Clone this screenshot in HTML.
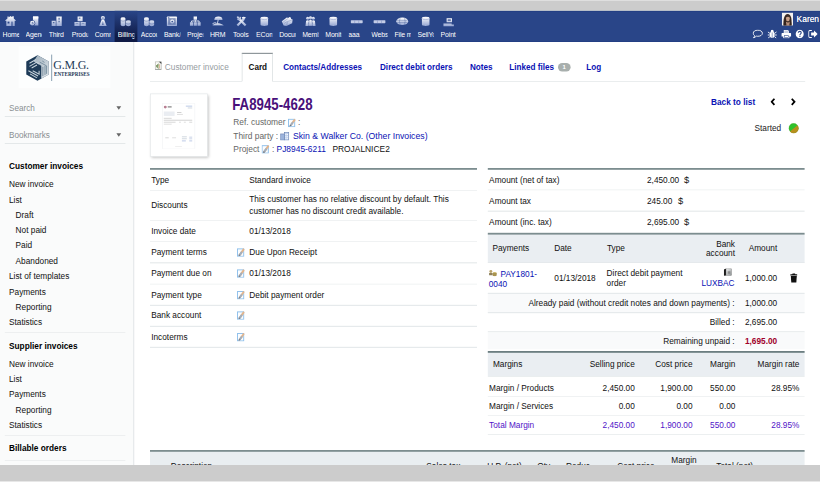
<!DOCTYPE html>
<html lang="en">
<head>
<meta charset="utf-8">
<title>FA8945-4628 - Customer invoice</title>
<style>
html,body{margin:0;padding:0;}
body{width:820px;height:482px;overflow:hidden;background:#fff;position:relative;}
#root{position:absolute;left:0;top:0;width:1367px;height:804px;transform:scale(0.6);transform-origin:0 0;
  font-family:"Liberation Sans",Arial,sans-serif;font-size:13.800px;color:#111;overflow:hidden;background:#fff;}
#root *{box-sizing:border-box;}
a{text-decoration:none;color:#0a12b4;}
.abs{position:absolute;}
#topstrip{left:0;top:0;width:1367px;height:18px;background:#cccccc;border-top:1.5px solid #ececec;border-bottom:1.200px solid #dedfd8;}
#botstrip{left:0;top:775px;width:1367px;height:29px;background:#cccccc;border-bottom:2.200px solid #eeeeee;}
/* top nav */
#nav{left:0;top:17.8px;width:1367px;height:52.2px;background:#294588;box-shadow:inset 0 1px 0 #1f3a80, inset 0 -1px 0 #1f3a80;}
.mi{position:absolute;top:0;width:38.4px;height:52.2px;}
.mi.sel{background:linear-gradient(#294588,#0f1a45 85%);}
.mi svg{position:absolute;left:8.7px;top:7px;width:21px;height:21px;}
.mi .lb{position:absolute;left:5.6px;top:31px;width:27.4px;height:16px;overflow:hidden;white-space:nowrap;
  color:#fff;font-size:11.5px;line-height:16px;letter-spacing:-0.2px;}
/* side */
#side{left:0;top:70px;width:223px;height:720px;background:#fafbfb;border-right:1.5px solid #dde2e4;box-shadow:1px 0 1px rgba(200,206,210,.35);}
.vt{position:absolute;left:15px;font-weight:bold;font-size:13.800px;color:#000;white-space:nowrap;line-height:16px;}
.vi{position:absolute;left:15px;font-size:13.800px;color:#111;white-space:nowrap;line-height:16px;}
.vi.in{left:26px;}
.vsep{position:absolute;left:8px;width:201px;height:1.5px;background:#e4e8ea;}
.sbox{position:absolute;left:8px;width:201px;height:34px;border-bottom:1.5px solid #d5dcde;color:#8a8f92;font-size:13.600px;line-height:16px;}
.sbox span{position:absolute;left:7px;top:11.800px;}
.sbox i{position:absolute;right:7px;top:16.500px;width:0;height:0;border-left:4.5px solid transparent;border-right:4.5px solid transparent;border-top:6px solid #666;}
/* main */
#main{left:0;top:0;width:1367px;height:804px;}
.tab{position:absolute;font-weight:bold;color:#0a12b4;white-space:nowrap;line-height:16px;font-size:13.600px;}
.tab.tt{font-weight:normal;color:#979c9f;font-size:13.800px;}
.tab.tc{color:#111;}
.ref{font-weight:bold;color:#48107a;font-size:26px;line-height:28px;white-space:nowrap;transform:scaleX(0.85);transform-origin:0 50%;}
.sub{color:#666;white-space:nowrap;line-height:16px;font-size:14px;}
.sub a.big{font-size:14.500px;}
.ed{display:inline-block;width:13px;height:15px;vertical-align:-3px;}
.t{position:absolute;white-space:nowrap;line-height:16px;color:#111;}

</style>
</head>
<body>
<div id="root">
<div id="topstrip" class="abs"></div>
<div id="nav" class="abs">
<svg width="0" height="0" style="position:absolute"><defs><linearGradient id="g" x1="0" y1="0" x2="0" y2="1"><stop offset="0" stop-color="#ffffff"/><stop offset="1" stop-color="#95a6d2"/></linearGradient></defs></svg>
<a class="mi" style="left:-1.38px"><svg viewBox="0 0 20 20"><path d="M10 1.500 L12.200 3.300 L13.200 2 L15.200 2 L15.200 5.600 L19 9 L16.600 9 V17.500 H3.400 V9 H1 L5.200 5.400 V2.500 H7 V3.900 Z" fill="url(#g)"/><rect x="5.300" y="10.500" width="3" height="3" fill="#294588"/><rect x="10.800" y="10.500" width="3.400" height="7" fill="#294588" opacity=".55"/></svg><span class="lb">Home</span></a>
<a class="mi" style="left:37.04px"><svg viewBox="0 0 20 20"><path d="M8.500 2.500 h8.500 v14 h-8.500z" fill="url(#g)"/><path d="M8.500 2.500 h8.500 v3 h-8.500z" fill="#fff"/><circle cx="7.500" cy="13" r="4.600" fill="#294588"/><circle cx="7.500" cy="13" r="3.700" fill="url(#g)"/><path d="M7.500 10.800 V13 H9.500" stroke="#294588" stroke-width="1" fill="none"/></svg><span class="lb">Agenda</span></a>
<a class="mi" style="left:75.46px"><svg viewBox="0 0 20 20"><path d="M9.500 2.500 h8.500 v15 h-8.500z M2 9 h6.500 v8.500 h-6.500z" fill="url(#g)"/><path d="M12.800 4.500h2v3h-2zM12.800 9h2v2.500h-2zM4 11h2.400v2H4z" fill="#294588" opacity=".75"/></svg><span class="lb">Third parties</span></a>
<a class="mi" style="left:113.88px"><svg viewBox="0 0 20 20"><path d="M6 2.500 h8 v7.300 h-8z M1 11 h8.400 v6.500 h-8.400z M10.600 11 h8.400 v6.500 h-8.400z" fill="url(#g)"/><path d="M8 4h2.500v2.500H8z" fill="#294588" opacity=".6"/><path d="M3 12.500h4v1.200H3zM12.600 12.500h4v1.200h-4z" fill="#294588" opacity=".45"/></svg><span class="lb">Products</span></a>
<a class="mi" style="left:152.30px"><svg viewBox="0 0 20 20"><circle cx="10" cy="4.800" r="3.300" fill="url(#g)"/><circle cx="10" cy="4.800" r="1.500" fill="#294588" opacity=".35"/><path d="M8 7.500 h4 l4 10 h-12z" fill="url(#g)"/><path d="M10 9 l1.300 7 h-2.600z" fill="#294588" opacity=".7"/></svg><span class="lb">Commercial</span></a>
<a class="mi sel" style="left:190.72px"><svg viewBox="0 0 20 20"><path d="M2 5.500 a3.800 1.800 0 0 1 7.600 0 v10.500 a3.800 1.800 0 0 1 -7.600 0z M10.400 10 a3.800 1.800 0 0 1 7.600 0 v6 a3.800 1.800 0 0 1 -7.600 0z" fill="url(#g)"/><path d="M2 8 a3.800 1.800 0 0 0 7.600 0 M10.400 12.500 a3.800 1.800 0 0 0 7.600 0" stroke="#294588" stroke-width=".7" fill="none" opacity=".7"/></svg><span class="lb">Billing | Payment</span></a>
<a class="mi" style="left:229.14px"><svg viewBox="0 0 20 20"><path d="M2 5.500 a3.800 1.800 0 0 1 7.600 0 v10.500 a3.800 1.800 0 0 1 -7.600 0z M10.400 10 a3.800 1.800 0 0 1 7.600 0 v6 a3.800 1.800 0 0 1 -7.600 0z" fill="url(#g)"/><path d="M2 8 a3.800 1.800 0 0 0 7.600 0 M10.400 12.500 a3.800 1.800 0 0 0 7.600 0" stroke="#294588" stroke-width=".7" fill="none" opacity=".7"/></svg><span class="lb">Accounting</span></a>
<a class="mi" style="left:267.56px"><svg viewBox="0 0 20 20"><rect x="2" y="2.500" width="16" height="15" rx="1" fill="url(#g)"/><rect x="4" y="5" width="12" height="10.500" fill="#294588" opacity=".5"/><circle cx="10.500" cy="10.500" r="3.300" fill="url(#g)"/><circle cx="10.500" cy="10.500" r="1.200" fill="#294588"/><rect x="3.500" y="3.500" width="2.500" height="1.800" fill="#294588" opacity=".7"/></svg><span class="lb">Bank/Cash</span></a>
<a class="mi" style="left:305.98px"><svg viewBox="0 0 20 20"><path d="M7.300 2.500 h5.400 v5 h-5.400z M1.500 11.500 h5 v5.500 h-5z M7.500 11.500 h5 v5.500 h-5z M13.500 11.500 h5 v5.500 h-5z" fill="url(#g)"/><path d="M10 7.500 V11.500 M4 11.500 V9.500 H16 V11.500" stroke="#dfe5f3" stroke-width="1.500" fill="none"/></svg><span class="lb">Projects</span></a>
<a class="mi" style="left:344.40px"><svg viewBox="0 0 20 20"><path d="M4 8 a6.500 5.500 0 0 1 13 0 z" fill="url(#g)"/><path d="M10.200 7.500 L8.800 13.500" stroke="#e6ebf6" stroke-width="1.300"/><path d="M1 16.500 q2 -3 6 -3.200 q5 -.5 8 1 q3 1 4 2.200 z" fill="url(#g)"/><path d="M1 14 q3 -2.500 6 -1.500" stroke="#e6ebf6" stroke-width="1.300" fill="none"/></svg><span class="lb">HRM</span></a>
<a class="mi" style="left:382.82px"><svg viewBox="0 0 20 20"><path d="M2.300 15.500 L11.800 6 L14.200 8.400 L4.700 17.900z" fill="url(#g)"/><path d="M10.300 3.700 q3.700 -2.200 7.200 1 l-2 .5 l-1 3.200 l-1.800 1.800 l-3 -3 l1.800 -1.800z" fill="url(#g)"/><path d="M17.700 15.500 L8.200 6 L5.800 8.400 L15.300 17.900z" fill="url(#g)"/><path d="M3 7 a3.300 3.300 0 1 0 4.600 -4.600 l-1.100 2.600 l-2.200 .3z" fill="url(#g)"/><path d="M2.300 3 l2.200 -1.200 l2.200 2.700 l-2.200 1.700z" fill="url(#g)"/></svg><span class="lb">Tools</span></a>
<a class="mi" style="left:421.24px"><svg viewBox="0 0 20 20"><path d="M4 5 a6 2.300 0 0 1 12 0 v10 a6 2.300 0 0 1 -12 0z" fill="url(#g)"/><path d="M4 5 a6 2.300 0 0 0 12 0" stroke="#8fa0cc" stroke-width=".9" fill="none"/></svg><span class="lb">ECommerce</span></a>
<a class="mi" style="left:459.66px"><svg viewBox="0 0 20 20"><path d="M1.500 10 L9.500 3.800 L12.300 4.800 L13 3.200 L16 3.800 L16.200 6 L18.800 7.200 L18 13 L9 17.500 L4.500 16.500z" fill="url(#g)"/><path d="M4 11 L11.500 5.500 M5.500 13.500 L9.500 10.500" stroke="#294588" stroke-width=".9" opacity=".4"/><path d="M9.300 17 L10.500 10.500 L18.500 7.500" stroke="#294588" stroke-width=".8" fill="none" opacity=".45"/></svg><span class="lb">Documents</span></a>
<a class="mi" style="left:498.08px"><svg viewBox="0 0 20 20"><circle cx="5.500" cy="5.200" r="2.400" fill="url(#g)"/><circle cx="14.500" cy="5.200" r="2.400" fill="url(#g)"/><circle cx="10" cy="4.500" r="2.700" fill="url(#g)"/><path d="M2 17.500 l1 -8.500 q2.500 -1.500 5 0 l-1 4 l1.500 4.500z M18 17.500 l-1 -8.500 q-2.500 -1.500 -5 0 l1 4 l-1.500 4.500z" fill="url(#g)"/><path d="M6.800 17.500 l1 -9.700 q2.200 -1 4.400 0 l1 9.700z" fill="url(#g)" stroke="#294588" stroke-width=".5"/></svg><span class="lb">Members</span></a>
<a class="mi" style="left:536.50px"><svg viewBox="0 0 20 20"><path d="M4 5 a6 2.300 0 0 1 12 0 v10 a6 2.300 0 0 1 -12 0z" fill="url(#g)"/><path d="M4 5 a6 2.300 0 0 0 12 0" stroke="#8fa0cc" stroke-width=".9" fill="none"/></svg><span class="lb">Monitoring</span></a>
<a class="mi" style="left:574.92px"><svg viewBox="0 0 20 20"><rect x="0.500" y="8.300" width="19" height="4.600" rx="1" fill="#c3cce6"/><path d="M6.800 8.300 v4.600 M13.200 8.300 v4.600" stroke="#8493c2" stroke-width=".9"/></svg><span class="lb">aaa</span></a>
<a class="mi" style="left:613.34px"><svg viewBox="0 0 20 20"><rect x="0.500" y="8.300" width="19" height="4.600" rx="1" fill="#c3cce6"/><path d="M6.800 8.300 v4.600 M13.200 8.300 v4.600" stroke="#8493c2" stroke-width=".9"/></svg><span class="lb">Websites</span></a>
<a class="mi" style="left:651.76px"><svg viewBox="0 0 20 20"><ellipse cx="10" cy="10" rx="9.500" ry="6" fill="url(#g)"/><path d="M1.500 8.500 h17 M1.500 11.800 h17 M6.500 4.500 q-2 5.500 0 11 M13.500 4.500 q2 5.500 0 11" stroke="#294588" stroke-width=".8" fill="none" opacity=".6"/></svg><span class="lb">File manager</span></a>
<a class="mi" style="left:690.18px"><svg viewBox="0 0 20 20"><path d="M4 5 a6 2.300 0 0 1 12 0 v10 a6 2.300 0 0 1 -12 0z" fill="url(#g)"/><path d="M4 5 a6 2.300 0 0 0 12 0" stroke="#8fa0cc" stroke-width=".9" fill="none"/></svg><span class="lb">SellYourSaas</span></a>
<a class="mi" style="left:728.60px"><svg viewBox="0 0 20 20"><path d="M7 5 h8.500 v6.500 h-8.500z M2 13.500 h13 v1.500 h3.500 v3 h-16.500z" fill="url(#g)"/><rect x="8.700" y="6.700" width="5" height="3" fill="#294588" opacity=".7"/></svg><span class="lb">Point of sale</span></a>
<svg class="abs" style="left:1303.3px;top:3.7px;width:18.7px;height:21.7px" viewBox="0 0 19 22" preserveAspectRatio="none">
<rect width="19" height="22" fill="#f4f2f0"/>
<path d="M3 22 C2 12 4 3 10 2.500 C16 3 17 10 16.500 22 Z" fill="#3a2a24"/>
<ellipse cx="10.300" cy="10" rx="3.300" ry="4.600" fill="#c9a088"/>
<path d="M6 8 C7 4 13 4 14.500 8 C12 6.500 9 6.500 6 8z" fill="#3a2a24"/>
<path d="M7 15 C9 17.500 12 17.500 13.500 15 L14.500 22 L6 22z" fill="#b58e78"/>
<path d="M3 22 C3 16 5 12 6.500 9 C6.500 14 7.500 18 8 22z M16.500 22 C16.500 16 15 12 14 9 C14 14 13.500 18 12.500 22z" fill="#33241f"/>
</svg>
<span class="abs" style="left:1327.7px;top:5.9px;color:#fff;font-size:14px;line-height:16px;white-space:nowrap;text-shadow:0 0 .6px rgba(255,255,255,.8)">Karen</span>
<svg class="abs" style="left:1253.7px;top:31.0px;width:18.0px;height:15.3px" viewBox="0 0 20 18" preserveAspectRatio="none"><path d="M10 1.500 C15 1.500 18.500 4 18.500 7.500 C18.500 11 15 13.500 10 13.500 C9 13.500 8 13.400 7.200 13.200 C6 14.800 4 16 2 16.500 C3.200 15.300 4 13.800 4 12.200 C2.400 11 1.500 9.400 1.500 7.500 C1.500 4 5 1.500 10 1.500z" fill="none" stroke="#fff" stroke-width="1.700"/></svg>
<svg class="abs" style="left:1278.8px;top:31.0px;width:16.0px;height:15.3px" viewBox="0 0 20 18" preserveAspectRatio="none"><ellipse cx="10" cy="10.500" rx="5" ry="6.500" fill="#fff"/><circle cx="10" cy="3.500" r="2.800" fill="#fff"/><path d="M1 5 L5.500 8 M19 5 L14.500 8 M0.500 11 H5 M19.500 11 H15 M1.500 17 L5.500 14 M18.500 17 L14.500 14" stroke="#fff" stroke-width="1.800"/><path d="M10 6 V17" stroke="#294588" stroke-width="1"/></svg>
<svg class="abs" style="left:1301.7px;top:31.0px;width:17.0px;height:15.3px" viewBox="0 0 20 18" preserveAspectRatio="none"><path d="M5 1 H13 L15 3 V7 H5z" fill="#fff"/><path d="M2 7 H18 Q19.500 7 19.500 8.500 V14 H16 V17.500 H4 V14 H0.500 V8.500 Q0.500 7 2 7z" fill="#fff"/><rect x="5.500" y="11.500" width="9" height="4.500" fill="#294588"/><rect x="6.500" y="12.500" width="7" height="2.500" fill="#fff"/><rect x="6.200" y="2.200" width="7.300" height="4.800" fill="#294588" opacity=".25"/></svg>
<svg class="abs" style="left:1325.0px;top:31.0px;width:15.7px;height:15.3px" viewBox="0 0 20 18" preserveAspectRatio="none"><circle cx="10" cy="9" r="8.500" fill="#fff"/><path d="M7 6.800 C7 4.800 8.500 3.800 10.200 3.800 C12 3.800 13.300 4.900 13.300 6.500 C13.300 8.600 10.400 8.800 10.400 11" fill="none" stroke="#294588" stroke-width="2.200"/><rect x="9.200" y="12.300" width="2.400" height="2.400" fill="#294588"/></svg>
<svg class="abs" style="left:1347.2px;top:31.0px;width:16.2px;height:15.3px" viewBox="0 0 20 18" preserveAspectRatio="none"><path d="M7.500 2 H3.500 Q1 2 1 4.500 V13.500 Q1 16 3.500 16 H7.500" fill="none" stroke="#fff" stroke-width="2"/><path d="M6 6.200 H12 V2 L19.500 9 L12 16 V11.800 H6z" fill="#fff"/></svg>
</div>
<div id="side" class="abs">
<div class="abs" style="left:31.3px;top:6.7px;width:152.5px;height:70.0px;background:#fdfefe"></div>
<svg class="abs" style="left:42.0px;top:20.5px;width:41.0px;height:44.7px" viewBox="0 0 46 50">
<defs><linearGradient id="lg1" x1="0" y1="0" x2="1" y2="1"><stop offset="0" stop-color="#9fb0bd"/><stop offset="1" stop-color="#dfe5e9"/></linearGradient></defs>
<path d="M23 1 L44 13 V37 L23 49 L2 37 V13 Z" fill="#1d3a57"/>
<path d="M23 1 L44 13 V37 L30 45 V21 L16 13 Z" fill="url(#lg1)"/>
<path d="M27 14 L40 21 V36 M32 12 L36 14.500 M33 23 V40 M37 21 V38" stroke="#6f8798" stroke-width="1.600" fill="none"/>
<path d="M8 16 L20 9 M8 22 L21 14.500 L26 17.500 M12 25 L22 19.500 M6 30 L24 40 M9 36 L22 43.500 M14 30 L26 36.500 L26 30" stroke="#c6d2da" stroke-width="2" fill="none"/>
</svg>
<div class="abs" style="left:85.0px;top:20.8px;width:1.6px;height:44.2px;background:#9db0be"></div>
<div class="abs" style="left:88.8px;top:25.2px;font-family:'Liberation Serif',serif;font-size:20px;line-height:26px;color:#1d3a57;white-space:nowrap;letter-spacing:-0.400px">G.M.G.</div>
<div class="abs" style="left:89.7px;top:45.5px;font-family:'Liberation Serif',serif;font-weight:bold;font-size:11.500px;line-height:12px;color:#1d3a57;white-space:nowrap;transform:scaleX(0.74);transform-origin:0 50%">ENTERPRISES</div>
<div class="sbox" style="top:90.8px"><span>Search</span><i></i></div>
<div class="sbox" style="top:135.8px"><span>Bookmarks</span><i></i></div>
<div class="vt" style="top:200.0px">Customer invoices</div>
<div class="vi" style="top:230.0px">New invoice</div>
<div class="vi" style="top:255.5px">List</div>
<div class="vi in" style="top:281.0px">Draft</div>
<div class="vi in" style="top:306.5px">Not paid</div>
<div class="vi in" style="top:332.1px">Paid</div>
<div class="vi in" style="top:357.7px">Abandoned</div>
<div class="vi" style="top:383.4px">List of templates</div>
<div class="vi" style="top:408.9px">Payments</div>
<div class="vi in" style="top:434.5px">Reporting</div>
<div class="vi" style="top:460.2px">Statistics</div>
<div class="vsep" style="top:483.6px"></div>
<div class="vt" style="top:498.5px">Supplier invoices</div>
<div class="vi" style="top:528.9px">New invoice</div>
<div class="vi" style="top:554.5px">List</div>
<div class="vi" style="top:580.0px">Payments</div>
<div class="vi in" style="top:605.5px">Reporting</div>
<div class="vi" style="top:631.0px">Statistics</div>
<div class="vsep" style="top:654.8px"></div>
<div class="vt" style="top:668.9px">Billable orders</div>
<div class="vsep" style="top:696.5px"></div>
</div>
<div id="main" class="abs">
<div class="abs" style="left:250.0px;top:135.2px;width:1091.7px;height:1.3px;background:#dce1e3"></div>
<div class="abs" style="left:402.8px;top:88.0px;width:52.7px;height:49.3px;background:#fff;border:1.5px solid #cfd5d8;border-bottom:2px solid #fff;border-top:2px solid #8f979b"></div>
<svg class="abs" style="left:258.2px;top:101.7px;width:11.5px;height:14.5px" viewBox="0 0 12 15"><path d="M0.800 0.800 H7.500 L11.200 4.500 V14.200 H0.800z" fill="#fbfbf8" stroke="#9a9c96" stroke-width="1"/><path d="M0.500 13.600 H11.500 V15 H0.500z" fill="#3f4a44"/><path d="M7 0.500 L11.500 0.500 L11.500 5 Z" fill="#3c3f3c"/><path d="M7.600 5.200 C5 4.600 3.600 6.300 3.600 8.500 C3.600 10.800 5 12.300 7.600 11.800 M2.500 7.600 H6.800 M2.500 9.500 H6.500" fill="none" stroke="#6f8a52" stroke-width="1.500"/><path d="M8.300 5.500 V12.500" stroke="#d9a07a" stroke-width="1.300"/></svg>
<div class="tab tt" style="left:274.7px;top:104.2px">Customer invoice</div>
<div class="tab tc" style="left:414.2px;top:104.2px">Card</div>
<div class="tab" style="left:472.0px;top:104.2px">Contacts/Addresses</div>
<div class="tab" style="left:633.3px;top:104.2px">Direct debit orders</div>
<div class="tab" style="left:783.3px;top:104.2px">Notes</div>
<div class="tab" style="left:848.8px;top:104.2px">Linked files</div>
<div class="abs" style="left:930.0px;top:104.8px;width:20.8px;height:14.0px;border-radius:8px;background:#a8afad;color:#fff;font-size:10px;line-height:13.7px;text-align:center;font-weight:bold">1</div>
<div class="tab" style="left:977.2px;top:104.2px">Log</div>
<div class="abs" style="left:249.8px;top:155.5px;width:96.0px;height:105.5px;background:#fff;border:1.2px solid #dfe3e5;box-shadow:1.5px 2.5px 5px rgba(0,0,0,.28)"></div>
<svg class="abs" style="left:270.0px;top:171.7px;width:55.8px;height:76.7px" viewBox="0 0 67 94" opacity=".6">
<rect x="0.5" y="0.5" width="66" height="93" fill="none" stroke="#e3e6ea" stroke-width="1"/>
<circle cx="6" cy="8" r="3" fill="#8a2a4a"/><rect x="11" y="6" width="8" height="3" fill="#555"/>
<rect x="48" y="5" width="13" height="2" fill="#8fa6d8"/><rect x="52" y="9" width="9" height="1.500" fill="#9ab"/>
<rect x="3" y="17" width="22" height="9" fill="#dde2ea"/><rect x="30" y="18" width="9" height="1.500" fill="#999"/><rect x="30" y="22" width="12" height="1.500" fill="#bbb"/>
<rect x="3" y="30" width="16" height="1.500" fill="#aaa"/><rect x="3" y="34" width="58" height="1.200" fill="#888"/>
<rect x="3" y="38" width="24" height="1.500" fill="#aaa"/><rect x="34" y="38" width="4" height="1.500" fill="#bbb"/><rect x="44" y="38" width="4" height="1.500" fill="#bbb"/><rect x="55" y="38" width="6" height="1.500" fill="#aaa"/>
<rect x="3" y="42" width="16" height="1.500" fill="#bbb"/>
<rect x="6" y="70" width="7" height="1.500" fill="#aaa"/><rect x="20" y="70" width="8" height="1.500" fill="#bbb"/>
<rect x="40" y="68" width="10" height="1.500" fill="#9ab"/><rect x="40" y="72" width="10" height="1.500" fill="#9ab"/><rect x="40" y="76" width="8" height="2" fill="#8fa6d8"/><rect x="55" y="68" width="6" height="6" fill="#c5d0e6"/><rect x="55" y="76" width="6" height="2" fill="#8fa6d8"/>
<rect x="26" y="88" width="14" height="1" fill="#ccc"/>
</svg>
<div class="abs ref" style="left:386.7px;top:159.8px">FA8945-4628</div>
<div class="abs sub" style="left:388.8px;top:195.7px">Ref. customer <svg class="ed" viewBox="0 0 13 15"><rect x="0.800" y="1.800" width="10.400" height="12.400" fill="#fbfdff" stroke="#8fc0ec" stroke-width="1.600"/><path d="M3.200 10.800 L10.300 0.800 L13 2.800 L5.900 12.700z" fill="#e2b48c"/><path d="M3.200 10.800 L6.800 5.800 L9.500 7.700 L5.900 12.700 L2.500 13.800z" fill="#a3afbd"/><path d="M2.500 13.800 L3.200 10.800 L5.900 12.700z" fill="#6a7078"/></svg> :</div>
<div class="abs sub" style="left:388.8px;top:217.7px">Third party : <svg class="ed" style="width:15px;height:14px;margin-right:2px" viewBox="0 0 12 13" preserveAspectRatio="none"><rect x="0.500" y="3" width="5" height="9.500" fill="#9db4dc" stroke="#5d78aa" stroke-width=".8"/><rect x="5.500" y="0.500" width="6" height="12" fill="#c3d3ee" stroke="#5d78aa" stroke-width=".8"/><path d="M7 3h1.200v1.500H7zM9 3h1.200v1.500H9zM7 6h1.200v1.500H7zM9 6h1.200v1.500H9zM7 9h1.200v1.500H7zM9 9h1.200v1.500H9z" fill="#fff"/></svg> <a class="big">Skin &amp; Walker Co. (Other Invoices)</a></div>
<div class="abs sub" style="left:388.8px;top:240.3px">Project <svg class="ed" viewBox="0 0 13 15"><rect x="0.800" y="1.800" width="10.400" height="12.400" fill="#fbfdff" stroke="#8fc0ec" stroke-width="1.600"/><path d="M3.200 10.800 L10.300 0.800 L13 2.800 L5.900 12.700z" fill="#e2b48c"/><path d="M3.200 10.800 L6.800 5.800 L9.500 7.700 L5.900 12.700 L2.500 13.800z" fill="#a3afbd"/><path d="M2.500 13.800 L3.200 10.800 L5.900 12.700z" fill="#6a7078"/></svg> : <a>PJ8945-6211</a> &nbsp;<span style="color:#111;margin-left:3px">PROJALNICE2</span></div>
<div class="abs" style="left:1185.0px;top:162.5px;font-weight:bold;color:#0a12b4;white-space:nowrap;line-height:16px">Back to list</div>
<svg class="abs" style="left:1284.2px;top:163.3px;width:8.3px;height:13.3px" viewBox="0 0 8 13"><path d="M6.500 1.500 L2 6.500 L6.500 11.500" fill="none" stroke="#000" stroke-width="2.900"/></svg>
<svg class="abs" style="left:1318.3px;top:163.3px;width:8.3px;height:13.3px" viewBox="0 0 8 13"><path d="M1.500 1.500 L6 6.500 L1.500 11.500" fill="none" stroke="#000" stroke-width="2.900"/></svg>
<div class="abs" style="left:1257.5px;top:205.8px;white-space:nowrap;line-height:16px;color:#222">Started</div>
<svg class="abs" style="left:1314.3px;top:205.3px;width:17.3px;height:17.3px" viewBox="0 0 20 20"><circle cx="10" cy="10" r="9.300" fill="#2fc22c"/><path d="M17.500 4.500 A9.300 9.300 0 0 1 3.000 16.200 Z" fill="#b8901c"/><circle cx="10" cy="10" r="9.300" fill="none" stroke="#7c8a3a" stroke-width=".8" opacity=".5"/></svg>
<div class="abs" style="left:250.0px;top:280.3px;width:545.0px;height:3px;background:#7c8d8f"></div>
<div class="abs" style="left:250.0px;top:316.8px;width:545.0px;height:1.5px;background:#e6eaec"></div>
<div class="abs" style="left:250.0px;top:366.9px;width:545.0px;height:1.5px;background:#e6eaec"></div>
<div class="abs" style="left:250.0px;top:401.8px;width:545.0px;height:1.5px;background:#e6eaec"></div>
<div class="abs" style="left:250.0px;top:437.4px;width:545.0px;height:1.5px;background:#e6eaec"></div>
<div class="abs" style="left:250.0px;top:472.8px;width:545.0px;height:1.5px;background:#e6eaec"></div>
<div class="abs" style="left:250.0px;top:508.2px;width:545.0px;height:1.5px;background:#e6eaec"></div>
<div class="abs" style="left:250.0px;top:543.2px;width:545.0px;height:1.5px;background:#e6eaec"></div>
<div class="abs" style="left:250.0px;top:578.4px;width:545.0px;height:1.5px;background:#e6eaec"></div>
<div class="t" style="left:252.0px;top:293.2px;">Type</div>
<div class="t" style="left:415.5px;top:293.2px;">Standard invoice</div>
<div class="t" style="left:252.0px;top:335.1px;">Discounts</div>
<div class="t" style="left:252.0px;top:377.9px;">Invoice date</div>
<div class="t" style="left:415.5px;top:377.9px;">01/13/2018</div>
<div class="t" style="left:252.0px;top:413.2px;">Payment terms</div>
<div class="abs" style="left:395.0px;top:413.0px"><svg class="ed" viewBox="0 0 13 15"><rect x="0.800" y="1.800" width="10.400" height="12.400" fill="#fbfdff" stroke="#8fc0ec" stroke-width="1.600"/><path d="M3.200 10.800 L10.300 0.800 L13 2.800 L5.900 12.700z" fill="#e2b48c"/><path d="M3.200 10.800 L6.800 5.800 L9.500 7.700 L5.900 12.700 L2.500 13.800z" fill="#a3afbd"/><path d="M2.500 13.800 L3.200 10.800 L5.900 12.700z" fill="#6a7078"/></svg></div>
<div class="t" style="left:415.5px;top:413.2px;">Due Upon Receipt</div>
<div class="t" style="left:252.0px;top:447.8px;">Payment due on</div>
<div class="abs" style="left:395.0px;top:447.6px"><svg class="ed" viewBox="0 0 13 15"><rect x="0.800" y="1.800" width="10.400" height="12.400" fill="#fbfdff" stroke="#8fc0ec" stroke-width="1.600"/><path d="M3.200 10.800 L10.300 0.800 L13 2.800 L5.900 12.700z" fill="#e2b48c"/><path d="M3.200 10.800 L6.800 5.800 L9.500 7.700 L5.900 12.700 L2.500 13.800z" fill="#a3afbd"/><path d="M2.500 13.800 L3.200 10.800 L5.900 12.700z" fill="#6a7078"/></svg></div>
<div class="t" style="left:415.5px;top:447.8px;">01/13/2018</div>
<div class="t" style="left:252.0px;top:484.1px;">Payment type</div>
<div class="abs" style="left:395.0px;top:483.9px"><svg class="ed" viewBox="0 0 13 15"><rect x="0.800" y="1.800" width="10.400" height="12.400" fill="#fbfdff" stroke="#8fc0ec" stroke-width="1.600"/><path d="M3.200 10.800 L10.300 0.800 L13 2.800 L5.900 12.700z" fill="#e2b48c"/><path d="M3.200 10.800 L6.800 5.800 L9.500 7.700 L5.900 12.700 L2.500 13.800z" fill="#a3afbd"/><path d="M2.500 13.800 L3.200 10.800 L5.900 12.700z" fill="#6a7078"/></svg></div>
<div class="t" style="left:415.5px;top:484.1px;">Debit payment order</div>
<div class="t" style="left:252.0px;top:518.3px;">Bank account</div>
<div class="abs" style="left:395.0px;top:518.1px"><svg class="ed" viewBox="0 0 13 15"><rect x="0.800" y="1.800" width="10.400" height="12.400" fill="#fbfdff" stroke="#8fc0ec" stroke-width="1.600"/><path d="M3.200 10.800 L10.300 0.800 L13 2.800 L5.900 12.700z" fill="#e2b48c"/><path d="M3.200 10.800 L6.800 5.800 L9.500 7.700 L5.900 12.700 L2.500 13.800z" fill="#a3afbd"/><path d="M2.500 13.800 L3.200 10.800 L5.900 12.700z" fill="#6a7078"/></svg></div>
<div class="t" style="left:252.0px;top:554.6px;">Incoterms</div>
<div class="abs" style="left:395.0px;top:554.4px"><svg class="ed" viewBox="0 0 13 15"><rect x="0.800" y="1.800" width="10.400" height="12.400" fill="#fbfdff" stroke="#8fc0ec" stroke-width="1.600"/><path d="M3.200 10.800 L10.300 0.800 L13 2.800 L5.900 12.700z" fill="#e2b48c"/><path d="M3.200 10.800 L6.800 5.800 L9.500 7.700 L5.900 12.700 L2.500 13.800z" fill="#a3afbd"/><path d="M2.500 13.800 L3.200 10.800 L5.900 12.700z" fill="#6a7078"/></svg></div>
<div class="t" style="left:415.5px;top:325.4px;">This customer has no relative discount by default. This</div>
<div class="t" style="left:415.5px;top:345.1px;">customer has no discount credit available.</div>
<div class="abs" style="left:812.5px;top:280.3px;width:528.8px;height:3px;background:#7c8d8f"></div>
<div class="abs" style="left:812.5px;top:315.8px;width:528.8px;height:1.5px;background:#e6eaec"></div>
<div class="abs" style="left:812.5px;top:351.1px;width:528.8px;height:1.5px;background:#e6eaec"></div>
<div class="t" style="left:815.2px;top:292.8px;">Amount (net of tax)</div>
<div class="t" style="left:1078.3px;top:292.8px;">2,450.00</div>
<div class="t" style="left:1140.0px;top:292.2px;font-size:15.600px">$</div>
<div class="t" style="left:815.2px;top:327.8px;">Amount tax</div>
<div class="t" style="left:1078.3px;top:327.8px;">245.00</div>
<div class="t" style="left:1130.0px;top:327.2px;font-size:15.600px">$</div>
<div class="t" style="left:815.2px;top:362.8px;">Amount (inc. tax)</div>
<div class="t" style="left:1078.3px;top:362.8px;">2,695.00</div>
<div class="t" style="left:1140.0px;top:362.2px;font-size:15.600px">$</div>
<div class="abs" style="left:812.5px;top:390.0px;width:528.8px;height:47.7px;background:#eaeef2"></div>
<div class="abs" style="left:812.5px;top:388.2px;width:528.8px;height:3px;background:#7c8d8f"></div>
<div class="abs" style="left:812.5px;top:436.9px;width:528.8px;height:1.5px;background:#dfe4e7"></div>
<div class="t" style="left:820.7px;top:406.8px;">Payments</div>
<div class="t" style="left:923.7px;top:406.8px;">Date</div>
<div class="t" style="left:1011.5px;top:406.8px;">Type</div>
<div class="t" style="right:142.0px;top:399.7px;text-align:right;">Bank</div>
<div class="t" style="right:142.0px;top:414.8px;text-align:right;">account</div>
<div class="t" style="left:1247.8px;top:406.8px;">Amount</div>
<div class="abs" style="left:812.5px;top:488.1px;width:528.8px;height:1.5px;background:#e6eaec"></div>
<svg class="abs" style="left:814.3px;top:449.2px;width:15.0px;height:11.7px" viewBox="0 0 15 12"><circle cx="4" cy="3.500" r="2.500" fill="#b9a26a"/><path d="M1 6h6v4H1z" fill="#8d7f5a"/><ellipse cx="10.500" cy="6" rx="3.500" ry="1.600" fill="#cdb86a"/><path d="M7 6v4a3.500 1.600 0 0 0 7 0V6" fill="#a89450"/></svg>
<div class="t" style="left:834.2px;top:449.0px;"><a>PAY1801-</a></div>
<div class="t" style="left:814.5px;top:465.7px;"><a>0040</a></div>
<div class="t" style="left:923.8px;top:456.0px;">01/13/2018</div>
<div class="t" style="left:1011.0px;top:447.5px;">Direct debit payment</div>
<div class="t" style="left:1011.0px;top:464.8px;">order</div>
<svg class="abs" style="left:1206.0px;top:447.2px;width:13.7px;height:13.2px" viewBox="0 0 12 12"><defs><linearGradient id="bk" x1="0" y1="0" x2="1" y2="1"><stop offset="0" stop-color="#f2f3f3"/><stop offset="1" stop-color="#8d9294"/></linearGradient></defs><path d="M0.300 2 L3.600 0.500 V11 L0.300 11.500z" fill="#1c1c1c"/><path d="M3.600 0.500 H11 Q11.800 0.500 11.800 1.300 V10.200 Q11.800 11 11 11 H3.600z" fill="url(#bk)" stroke="#666" stroke-width=".5"/><path d="M6 4.500h4v4H6z" fill="#777" opacity=".7"/></svg>
<div class="t" style="right:142.7px;top:464.8px;text-align:right;"><a>LUXBAC</a></div>
<div class="t" style="right:71.7px;top:456.0px;text-align:right;">1,000.00</div>
<svg class="abs" style="left:1317.2px;top:455.3px;width:12.0px;height:16.3px" viewBox="0 0 12 16"><path d="M4 0.500h4l.6 1.500H12v2H0v-2h3.400z" fill="#111"/><path d="M1 5h10l-.8 10.500H1.800z" fill="#111"/></svg>
<div class="abs" style="left:812.5px;top:489.7px;width:528.8px;height:30.8px;background:#f9fafb"></div>
<div class="abs" style="left:812.5px;top:520.1px;width:528.8px;height:1.5px;background:#e6eaec"></div>
<div class="abs" style="left:812.5px;top:552.2px;width:528.8px;height:1.5px;background:#e6eaec"></div>
<div class="abs" style="left:812.5px;top:553.7px;width:528.8px;height:28.0px;background:#f9fafb"></div>
<div class="t" style="right:142.7px;top:498.0px;text-align:right;">Already paid (without credit notes and down payments) :</div>
<div class="t" style="right:71.7px;top:498.0px;text-align:right;">1,000.00</div>
<div class="t" style="right:142.7px;top:528.5px;text-align:right;">Billed :</div>
<div class="t" style="right:71.7px;top:528.5px;text-align:right;">2,695.00</div>
<div class="t" style="right:142.7px;top:560.8px;text-align:right;">Remaining unpaid :</div>
<div class="t" style="right:71.7px;top:560.8px;text-align:right;font-weight:bold;color:#a0002a">1,695.00</div>
<div class="abs" style="left:812.5px;top:585.7px;width:528.8px;height:41.8px;background:#eaeef2"></div>
<div class="abs" style="left:812.5px;top:584.5px;width:528.8px;height:3px;background:#6c7e81"></div>
<div class="abs" style="left:812.5px;top:626.8px;width:528.8px;height:1.5px;background:#dfe4e7"></div>
<div class="abs" style="left:812.5px;top:659.9px;width:528.8px;height:1.5px;background:#e6eaec"></div>
<div class="abs" style="left:812.5px;top:691.8px;width:528.8px;height:1.5px;background:#e6eaec"></div>
<div class="abs" style="left:812.5px;top:723.6px;width:528.8px;height:1.5px;background:#dfe4e7"></div>
<div class="t" style="left:821.5px;top:599.0px;">Margins</div>
<div class="t" style="right:309.0px;top:599.0px;text-align:right;">Selling price</div>
<div class="t" style="right:212.8px;top:599.0px;text-align:right;">Cost price</div>
<div class="t" style="right:141.3px;top:599.0px;text-align:right;">Margin</div>
<div class="t" style="right:34.7px;top:599.0px;text-align:right;">Margin rate</div>
<div class="t" style="left:815.2px;top:638.5px;">Margin / Products</div>
<div class="t" style="right:309.0px;top:638.5px;text-align:right;">2,450.00</div>
<div class="t" style="right:212.8px;top:638.5px;text-align:right;">1,900.00</div>
<div class="t" style="right:141.3px;top:638.5px;text-align:right;">550.00</div>
<div class="t" style="right:34.7px;top:638.5px;text-align:right;">28.95%</div>
<div class="t" style="left:815.2px;top:669.2px;">Margin / Services</div>
<div class="t" style="right:309.0px;top:669.2px;text-align:right;">0.00</div>
<div class="t" style="right:212.8px;top:669.2px;text-align:right;">0.00</div>
<div class="t" style="right:141.3px;top:669.2px;text-align:right;">0.00</div>
<div class="t" style="left:815.2px;top:700.5px;color:#5014c8">Total Margin</div>
<div class="t" style="right:309.0px;top:700.5px;text-align:right;color:#5014c8">2,450.00</div>
<div class="t" style="right:212.8px;top:700.5px;text-align:right;color:#5014c8">1,900.00</div>
<div class="t" style="right:141.3px;top:700.5px;text-align:right;color:#5014c8">550.00</div>
<div class="t" style="right:34.7px;top:700.5px;text-align:right;color:#5014c8">28.95%</div>
<div class="abs" style="left:250.0px;top:751.7px;width:1091.3px;height:31.7px;background:#e9eef1"></div>
<div class="abs" style="left:250.0px;top:750.0px;width:1091.3px;height:3.2px;background:#7c8d8f"></div>
<div class="t" style="left:284.7px;top:768.5px;">Description</div>
<div class="t" style="left:710.5px;top:768.5px;">Sales tax</div>
<div class="t" style="left:812.2px;top:768.5px;">U.P. (net)</div>
<div class="t" style="left:895.5px;top:768.5px;">Qty</div>
<div class="t" style="left:943.3px;top:768.5px;">Reduc.</div>
<div class="t" style="left:1028.8px;top:768.5px;">Cost price</div>
<div class="t" style="left:1118.8px;top:759.7px;">Margin</div>
<div class="t" style="left:1118.8px;top:777.3px;">rate</div>
<div class="t" style="left:1193.8px;top:768.5px;">Total (net)</div>
</div>
<div id="botstrip" class="abs"></div>
</div>
</body>
</html>
